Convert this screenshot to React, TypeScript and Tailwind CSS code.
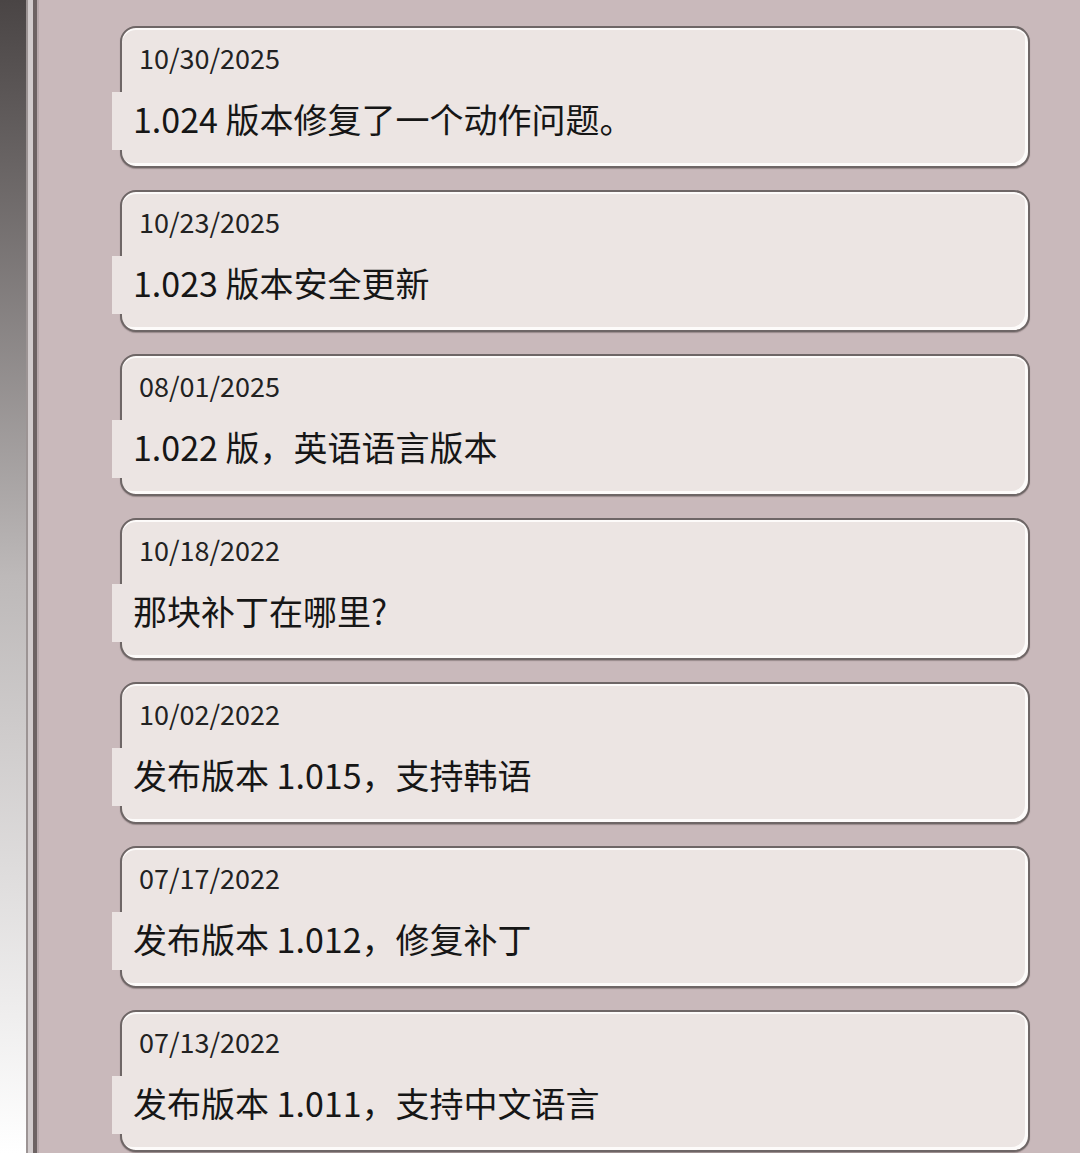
const notes = [
    { date: "10/30/2025", text: "1.024 版本修复了一个动作问题。" },
    { date: "10/23/2025", text: "1.023 版本安全更新" },
    { date: "08/01/2025", text: "1.022 版，英语语言版本" },
    { date: "10/18/2022", text: "那块补丁在哪里?" },
    { date: "10/02/2022", text: "发布版本 1.015，支持韩语" },
    { date: "07/17/2022", text: "发布版本 1.012，修复补丁" },
    { date: "07/13/2022", text: "发布版本 1.011，支持中文语言" },
];

const NoteCard = ({ date, text }: { date: string; text: string }) => {
    return (
        <div className="relative h-[142px] shrink-0 rounded-[16px] border-2 border-[#6e6666] bg-[#ece5e3] shadow-[inset_0_2px_0_#fdfbfa,inset_-3px_-3px_0_#fdfbfa,0_1px_1px_rgba(60,50,50,0.35)]">
            <div className="absolute left-[-10px] top-[64px] h-[58px] w-[18px] bg-[#ebe4e3]" />
            <div className="relative pt-[12px]">
                <div className="pl-[17px] text-[27px] leading-[36px] text-[#222]">
                    {date}
                </div>
                <div className="mt-[20px] pl-[11px] text-[34px] leading-[46px] text-[#161616]">
                    {text}
                </div>
            </div>
        </div>
    );
};

export default function App() {
    return (
        <div
            className="flex h-[1153px] w-[1080px] overflow-hidden bg-[#c9b9bb]"
            style={{ fontFamily: '"Noto Sans CJK SC", "Noto Sans", sans-serif' }}
        >
            <div className="w-[26px] shrink-0 bg-gradient-to-b from-[#4a4545] via-[#bdb9b9] to-[#ffffff]" />
            <div className="w-[2px] shrink-0 bg-[#9c9494]" />
            <div className="w-[5px] shrink-0 bg-[#d2cccd]" />
            <div className="w-[4px] shrink-0 bg-[#6d6363]" />
            <div className="w-[2px] shrink-0 bg-[#b7a9ab]" />
            <div className="flex flex-1 flex-col gap-[22px] pl-[81px] pr-[50px] pt-[26px]">
                {notes.map((n) => (
                    <NoteCard key={n.date} date={n.date} text={n.text} />
                ))}
            </div>
        </div>
    );
}
